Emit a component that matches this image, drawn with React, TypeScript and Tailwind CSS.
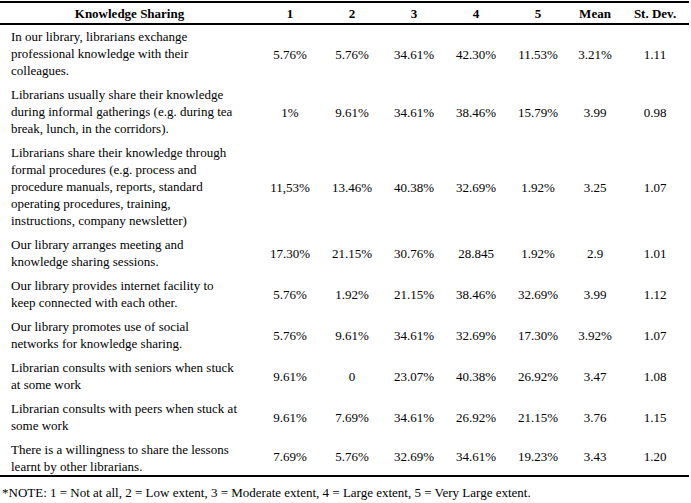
import React from 'react';

interface Row {
  lines: string[];
  values: string[];
}

const rows: Row[] = [
  {
    lines: ['In our library, librarians exchange', 'professional knowledge with their', 'colleagues.'],
    values: ['5.76%', '5.76%', '34.61%', '42.30%', '11.53%', '3.21%', '1.11'],
  },
  {
    lines: [
      'Librarians usually share their knowledge',
      'during informal gatherings (e.g. during tea',
      'break, lunch, in the corridors).',
    ],
    values: ['1%', '9.61%', '34.61%', '38.46%', '15.79%', '3.99', '0.98'],
  },
  {
    lines: [
      'Librarians share their knowledge through',
      'formal procedures (e.g. process and',
      'procedure manuals, reports, standard',
      'operating procedures, training,',
      'instructions, company newsletter)',
    ],
    values: ['11,53%', '13.46%', '40.38%', '32.69%', '1.92%', '3.25', '1.07'],
  },
  {
    lines: ['Our library arranges meeting and', 'knowledge sharing sessions.'],
    values: ['17.30%', '21.15%', '30.76%', '28.845', '1.92%', '2.9', '1.01'],
  },
  {
    lines: ['Our library provides internet facility to', 'keep connected with each other.'],
    values: ['5.76%', '1.92%', '21.15%', '38.46%', '32.69%', '3.99', '1.12'],
  },
  {
    lines: ['Our library promotes use of social', 'networks for knowledge sharing.'],
    values: ['5.76%', '9.61%', '34.61%', '32.69%', '17.30%', '3.92%', '1.07'],
  },
  {
    lines: ['Librarian consults with seniors when stuck', 'at some work'],
    values: ['9.61%', '0', '23.07%', '40.38%', '26.92%', '3.47', '1.08'],
  },
  {
    lines: ['Librarian consults with peers when stuck at', 'some work'],
    values: ['9.61%', '7.69%', '34.61%', '26.92%', '21.15%', '3.76', '1.15'],
  },
  {
    lines: ['There is a willingness to share the lessons', 'learnt by other librarians.'],
    values: ['7.69%', '5.76%', '32.69%', '34.61%', '19.23%', '3.43', '1.20'],
  },
];

const headers = ['1', '2', '3', '4', '5', 'Mean', 'St. Dev.'];

export default function App() {
  return (
    <div className="h-[503px] w-[691px] bg-white pt-px font-['Liberation_Serif',serif] text-[13px] leading-[17px] text-black">
      <table className="w-[689px] table-fixed border-collapse border-t-2 border-b-2 border-black">
        <colgroup>
          <col className="w-[259px]" />
          <col className="w-[62px]" />
          <col className="w-[62px]" />
          <col className="w-[62px]" />
          <col className="w-[62px]" />
          <col className="w-[62px]" />
          <col className="w-[52px]" />
          <col className="w-[68px]" />
        </colgroup>
        <thead>
          <tr className="border-b-2 border-black">
            <th className="h-[22px] p-0 text-center font-bold">Knowledge Sharing</th>
            {headers.map((h) => (
              <th key={h} className="h-[22px] p-0 text-center font-bold">
                {h}
              </th>
            ))}
          </tr>
        </thead>
        <tbody>
          {rows.map((row, i) => {
            const last = i === rows.length - 1;
            return (
              <tr key={i}>
                <td className={`pl-[11px] pr-0 pt-[3px] align-middle ${last ? 'pb-0' : 'pb-[4px]'}`}>
                  {row.lines.map((line, j) => (
                    <React.Fragment key={j}>
                      {j > 0 && <br />}
                      {line}
                    </React.Fragment>
                  ))}
                </td>
                {row.values.map((v, j) => (
                  <td key={j} className="p-0 text-center align-middle">
                    {v}
                  </td>
                ))}
              </tr>
            );
          })}
        </tbody>
      </table>
      <p className="mt-[7px] pl-[2px]">
        *NOTE: 1 = Not at all, 2 = Low extent, 3 = Moderate extent, 4 = Large extent, 5 = Very Large extent.
      </p>
    </div>
  );
}
